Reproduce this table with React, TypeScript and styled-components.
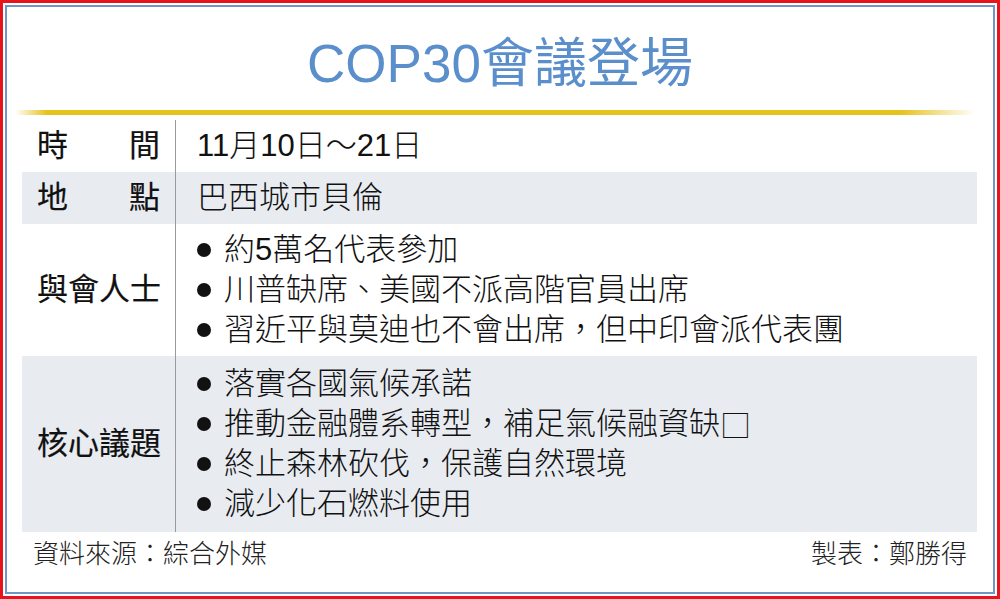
import { FunctionComponent } from 'react';
import styled, { createGlobalStyle } from 'styled-components';

const GlobalStyle = createGlobalStyle`
	html, body {
		margin: 0;
		padding: 0;
		background: #ffffff;
	}
	body {
		font-family: 'Liberation Sans', 'Noto Sans CJK TC', sans-serif;
	}
`;

const Frame = styled.div`
	box-sizing: border-box;
	width: 1000px;
	height: 599px;
	border: 3px solid #e8141b;
	padding: 2px;
	background: #ffffff;
`;

const Inner = styled.div`
	box-sizing: border-box;
	height: 100%;
	border: 2px solid #7096c3;
	display: flex;
	flex-direction: column;
`;

const Title = styled.h1`
	margin: 30px 0 0 0;
	height: 73px;
	line-height: 53px;
	font-size: 53px;
	font-weight: 400;
	text-align: center;
	color: #5a8fcc;
`;

const GoldBar = styled.div`
	height: 5px;
	margin: 0 18px 0 8px;
	background: linear-gradient(
		to right,
		rgba(232, 196, 28, 0) 0px,
		#e6c21c 32px,
		#e6c21c calc(100% - 75px),
		rgba(232, 196, 28, 0) 100%
	);
`;

const Table = styled.div`
	margin: 5px 16px 0 15px;
	display: flex;
	flex-direction: column;
`;

const Row = styled.div<{ $shaded?: boolean; $pad?: number }>`
	display: grid;
	grid-template-columns: 153px 1fr;
	background: ${(p) => (p.$shaded ? '#e8ecf1' : 'transparent')};
	min-height: ${(p) => (p.$pad ? 0 : 52)}px;
`;

const LabelCell = styled.div`
	display: flex;
	align-items: center;
	justify-content: space-between;
	padding: 0 15px;
	font-size: 31px;
	font-weight: 400;
	-webkit-text-stroke: 0.2px #111111;
	color: #111111;
	line-height: 40px;
`;

const ValueCell = styled.div<{ $pad?: number }>`
	border-left: 1px solid #9a9a9a;
	padding: ${(p) => p.$pad ?? 0}px 0 ${(p) => p.$pad ?? 0}px 21px;
	display: flex;
	flex-direction: column;
	justify-content: center;
	font-size: 31px;
	font-weight: 300;
	color: #111111;
	line-height: 40px;
`;

const Item = styled.div`
	display: flex;
	align-items: center;
	white-space: nowrap;
`;

const Dot = styled.span`
	width: 14px;
	height: 14px;
	border-radius: 50%;
	background: #111111;
	margin: 0 13px 0 0;
	flex: none;
`;

const Box = styled.span`
	font-family: 'Noto Sans CJK TC', sans-serif;
`;

const Footer = styled.div`
	display: flex;
	justify-content: space-between;
	padding: 9px 26px 0 26px;
	font-size: 26px;
	font-weight: 300;
	line-height: 26px;
	color: #222222;
`;

const Label: FunctionComponent<{ text: string }> = ({ text }) => (
	<LabelCell>
		{text.split('').map((ch, i) => (
			<span key={i}>{ch}</span>
		))}
	</LabelCell>
);

const attendees = ['約5萬名代表參加', '川普缺席、美國不派高階官員出席', '習近平與莫迪也不會出席，但中印會派代表團'];

const topics = ['落實各國氣候承諾', '推動金融體系轉型，補足氣候融資缺', '終止森林砍伐，保護自然環境', '減少化石燃料使用'];

const App: FunctionComponent = () => {
	return (
		<>
			<GlobalStyle />
			<Frame>
				<Inner>
					<Title>COP30會議登場</Title>
					<GoldBar />
					<Table>
						<Row>
							<Label text="時間" />
							<ValueCell>11月10日～21日</ValueCell>
						</Row>
						<Row $shaded>
							<Label text="地點" />
							<ValueCell>巴西城市貝倫</ValueCell>
						</Row>
						<Row $pad={6}>
							<Label text="與會人士" />
							<ValueCell $pad={6}>
								{attendees.map((t) => (
									<Item key={t}>
										<Dot />
										{t}
									</Item>
								))}
							</ValueCell>
						</Row>
						<Row $shaded $pad={8}>
							<Label text="核心議題" />
							<ValueCell $pad={8}>
								{topics.map((t, i) => (
									<Item key={t}>
										<Dot />
										{t}
										{i === 1 && <Box>□</Box>}
									</Item>
								))}
							</ValueCell>
						</Row>
					</Table>
					<Footer>
						<span>資料來源：綜合外媒</span>
						<span>製表：鄭勝得</span>
					</Footer>
				</Inner>
			</Frame>
		</>
	);
};

export default App;
